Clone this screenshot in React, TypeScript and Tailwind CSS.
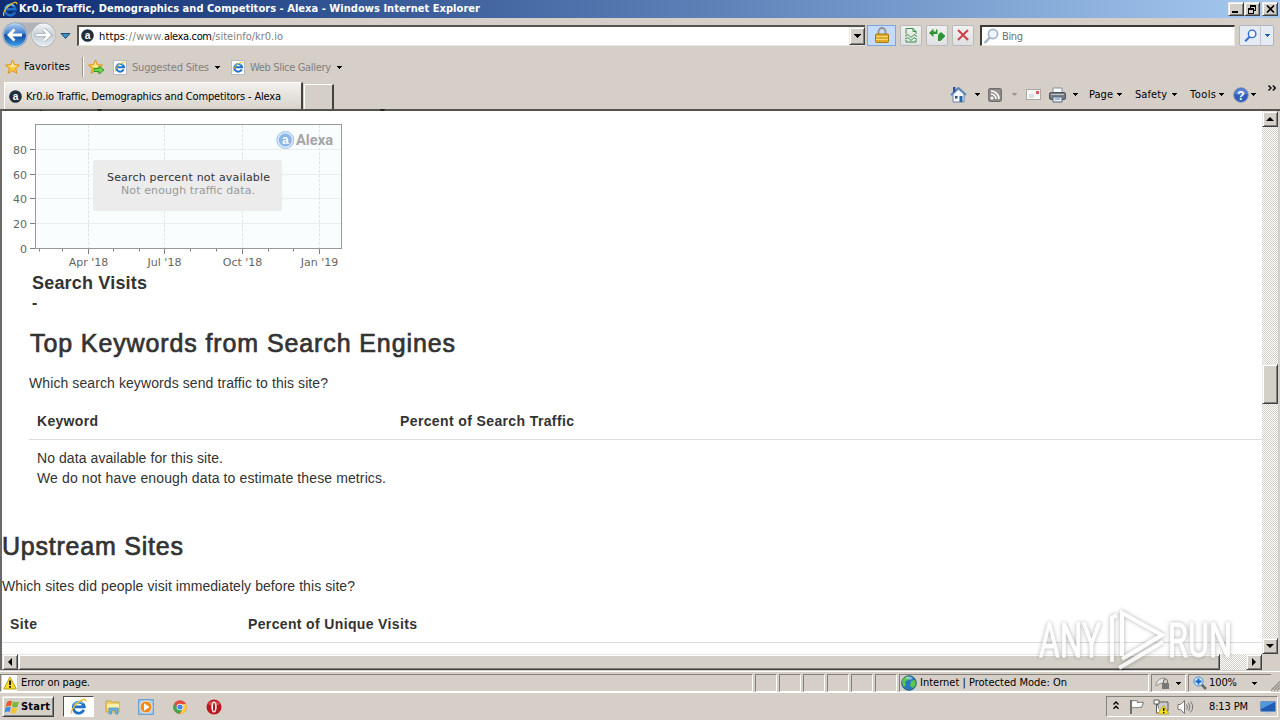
import { useLayoutEffect, useRef, useState, type ReactNode } from "react";

/** Single line of text whose tracking is adjusted to fill a given width. */
function Fit({ w, className = "", children }: { w: number; className?: string; children: ReactNode }) {
  const ref = useRef<HTMLSpanElement>(null);
  const [ls, setLs] = useState(0);
  useLayoutEffect(() => {
    const el = ref.current;
    if (!el) return;
    const n = (el.textContent ?? "").length;
    const natural = el.getBoundingClientRect().width - ls * n;
    setLs((w - natural) / Math.max(n - 1, 1));
  }, [w]);
  return (
    <span className={"block shrink-0 whitespace-pre " + className} style={{ width: w }}>
      <span ref={ref} style={{ letterSpacing: ls }}>{children}</span>
    </span>
  );
}

function Caret({ className = "", color = "#000" }: { className?: string; color?: string }) {
  return (
    <svg className={"block shrink-0 " + className} width="5" height="3" viewBox="0 0 5 3" shapeRendering="crispEdges">
      <path d="M0 0h5v1h-1v1h-1v1h-1v-1h-1v-1h-1z" fill={color} />
    </svg>
  );
}

function IeIcon({ size = 16, className = "" }: { size?: number; className?: string }) {
  return (
    <svg className={"block shrink-0 " + className} width={size} height={size} viewBox="0 0 16 16" fill="none">
      <path d="M13 11.2a5.2 5.2 0 1 1 .4-2.9H4.6" stroke="#1d6fc9" strokeWidth="2.6" />
      <path d="M12.2 5.2A5 5 0 0 0 3.6 7" stroke="#6fc4f5" strokeWidth="1.2" />
      <path d="M2.2 14.6C.2 13.400 2.600 8.200 7.500 4.300 11.500 1 15.300.3 15 3.300" stroke="#f0bd22" strokeWidth="1.3" />
    </svg>
  );
}

function PageIe({ className = "" }: { className?: string }) {
  return (
    <span className={"flex h-[15px] w-[14px] shrink-0 items-center justify-start border border-[#b9bcc0] bg-white " + className}>
      <IeIcon size={12} />
    </span>
  );
}

function AlexaMark({ size = 13 }: { size?: number }) {
  return (
    <svg className="block shrink-0" width={size} height={size} viewBox="0 0 14 14">
      <circle cx="7" cy="7" r="6.8" fill="#1f2f3b" />
      <text x="7" y="10.600" fontSize="11" fontWeight="700" textAnchor="middle" fill="#fff" fontFamily="Liberation Sans, sans-serif">a</text>
    </svg>
  );
}

function Star({ arrow = false }: { arrow?: boolean }) {
  return (
    <svg className="block shrink-0" width="17" height="16" viewBox="0 0 17 16">
      <path d="M7.500 1l2 4.600 5 .5-3.800 3.300 1.200 5-4.400-2.700-4.400 2.700 1.200-5L.5 6.100l5-.5z" fill="#fbc63a" stroke="#dd8f13" strokeWidth=".9" />
      <path d="M7.500 2.500l1.200 4 4 .2-5.200 1.800-4.500-1.800 3.500-.2z" fill="#fff0a5" />
      {arrow && <path d="M6 9.500h5V7l5 4-5 4v-2.500H6z" fill="#6dd54e" stroke="#259622" strokeWidth=".9" />}
    </svg>
  );
}

function ToolButton({ className = "", children }: { className?: string; children: ReactNode }) {
  return (
    <span className={"flex h-[21px] w-[22px] shrink-0 items-center justify-center rounded-[2px] border border-[#b7b9bd] bg-linear-to-b from-[#f1f1f1] to-[#dfe0e2] " + className}>
      {children}
    </span>
  );
}

const raised = "border border-t-[#ebe9e4] border-l-[#ebe9e4] border-r-[#404040] border-b-[#404040] shadow-[inset_1px_1px_0_#fff,inset_-1px_-1px_0_#808080] bg-[#d4d0c8]";
const dither = "bg-[#e9e6e2] bg-[repeating-conic-gradient(#d4d0c8_0_25%,#ffffff_0_50%)] bg-[length:2px_2px]";

function WinButton({ className = "", children }: { className?: string; children: ReactNode }) {
  return <span className={"flex h-[14px] w-[16px] items-center justify-center " + raised + " " + className}>{children}</span>;
}

function TitleBar() {
  return (
    <header className="flex h-[18px] shrink-0 items-center bg-linear-to-r from-[#0f2c72] to-[#a6caf0] pr-[2px] pl-[2px]">
      <IeIcon size={16} />
      <Fit w={460} className="ml-[1px] text-[11px] leading-[18px] font-bold text-white">
        Kr0.io Traffic, Demographics and Competitors - Alexa - Windows Internet Explorer
      </Fit>
      <div className="ml-auto flex">
        <WinButton><svg width="8" height="8" viewBox="0 0 8 8"><path d="M0 6h6v2H0z" /></svg></WinButton>
        <WinButton>
          <svg width="9" height="9" viewBox="0 0 9 9" shapeRendering="crispEdges">
            <path d="M2 0h6v6h-2v-1h1v-3h-4v1h-1zM0 3h6v6h-6zM1 5v3h4v-3z" fillRule="evenodd" />
          </svg>
        </WinButton>
        <WinButton className="ml-[2px]"><svg width="9" height="8" viewBox="0 0 9 8"><path d="M1 .5l7 7M8 .5l-7 7" stroke="#000" strokeWidth="1.6" /></svg></WinButton>
      </div>
    </header>
  );
}

function NavButtons() {
  return (
    <svg className="block shrink-0" width="72" height="32" viewBox="0 0 72 32">
      <defs>
        <linearGradient id="bk" x1="0" y1="0" x2="0" y2="1">
          <stop offset="0" stopColor="#a8cdf3" /><stop offset=".45" stopColor="#3f7cc9" /><stop offset=".5" stopColor="#134a9f" /><stop offset="1" stopColor="#3ea0ea" />
        </linearGradient>
        <linearGradient id="fw" x1="0" y1="0" x2="0" y2="1">
          <stop offset="0" stopColor="#f4f6f9" /><stop offset=".5" stopColor="#c5ccd5" /><stop offset="1" stopColor="#e8edf3" />
        </linearGradient>
      </defs>
      <path d="M14 3.500h30v4q-15 3-15 10q0-7-15-10z" fill="#b3b3ba" />
      <circle cx="15" cy="16" r="12.500" fill="#8797ad" />
      <circle cx="15" cy="16" r="11.500" fill="url(#bk)" stroke="#d8e6f5" strokeWidth=".6" />
      <path d="M14.500 10.500L9 16l5.500 5.500M9.500 16H22" stroke="#fff" strokeWidth="2.800" fill="none" />
      <circle cx="43.500" cy="16" r="12.200" fill="#a3a9b2" />
      <circle cx="43.500" cy="16" r="11.300" fill="url(#fw)" stroke="#fff" strokeWidth=".5" />
      <path d="M44 10.500l5.500 5.500-5.500 5.500M49 16H36.500" stroke="#9ba5b1" strokeWidth="4" fill="none" />
      <path d="M44 10.500l5.500 5.500-5.500 5.500M49 16H36.500" stroke="#fff" strokeWidth="2.600" fill="none" />
      <path d="M61 14.500h9l-4.500 5z" fill="#3f8fc5" stroke="#1d4e78" strokeWidth="1" />
    </svg>
  );
}

function Magnifier({ color, size = 16 }: { color: string; size?: number }) {
  return (
    <svg className="block shrink-0" width={size} height={size} viewBox="0 0 16 16" fill="none">
      <path d="M7 9.500L1.500 15" stroke={color} strokeWidth="2.400" />
      <circle cx="10" cy="6" r="4.600" fill="#eef5fd" stroke={color} strokeWidth="1.700" />
    </svg>
  );
}

function AddressRow() {
  return (
    <div className="flex h-[34px] shrink-0 items-center">
      <NavButtons />
      <div className="ml-[5px] flex h-[21px] w-[788px] shrink-0 items-center border-t-2 border-l-2 border-b border-t-[#55534f] border-l-[#55534f] border-b-[#e8e6e0] bg-white pl-[2px]">
        <AlexaMark size={13} />
        <div className="mt-[2px] ml-[5px] flex text-[11px] leading-[16px] text-[#808080]">
          <Fit w={26} className="text-black">https</Fit>
          <Fit w={39}>://www.</Fit>
          <Fit w={48} className="text-black">alexa.com</Fit>
          <Fit w={71}>/siteinfo/kr0.io</Fit>
        </div>
        <span className={"ml-auto flex h-[18px] w-[16px] items-center justify-center " + raised}>
          <svg width="7" height="4" viewBox="0 0 7 4" shapeRendering="crispEdges"><path d="M0 0h7v1h-1v1h-1v1h-1v1h-1v-1h-1v-1h-1v-1h-1z" /></svg>
        </span>
      </div>
      <span className="ml-[2px] flex h-[21px] w-[29px] shrink-0 items-center justify-center border border-[#7da7e2] bg-[#c4dcfb]">
        <svg width="14" height="16" viewBox="0 0 14 16">
          <path d="M3.500 8V4.500a3.500 3.500 0 0 1 7 0V8" fill="none" stroke="#97918b" strokeWidth="1.800" />
          <rect x=".5" y="7" width="13" height="8.500" rx="1" fill="#e0a928" stroke="#a87913" />
          <path d="M1 9.500h12M1 12.500h12" stroke="#f9d978" />
        </svg>
      </span>
      <ToolButton className="ml-[4px]">
        <svg width="14" height="16" viewBox="0 0 14 16" fill="none" stroke="#379245">
          <path d="M2 7V1.500h7l3 3V7M9 1.500v3h3M2 13v2h10v-2" /><path d="M1 9l3-1.500 3 3 3-3 3 2M1 12l3-1.500 3 3 3-3 3 2" />
        </svg>
      </ToolButton>
      <ToolButton className="ml-[4px]">
        <svg width="16" height="14" viewBox="0 0 16 14" fill="#2f9436">
          <path d="M0 5L4.500.5V3.500H7V1.500h1.500V6H4.500v3z" />
          <path d="M16 8.500L11.500 13H10V9.500H9V7h2l-2-.5L12 4l4 3.500zM9 9l2 .5V13H9z" />
        </svg>
      </ToolButton>
      <ToolButton className="ml-[4px]">
        <svg width="12" height="12" viewBox="0 0 12 12"><path d="M1 1l10 10M11 1L1 11" stroke="#d04048" strokeWidth="2" /></svg>
      </ToolButton>
      <div className="ml-[6px] flex h-[21px] w-[255px] shrink-0 items-center border-t-2 border-l-2 border-r border-b border-t-[#3c3a37] border-l-[#3c3a37] border-r-[#e8e6e0] border-b-[#e8e6e0] bg-white pl-[1px]">
        <Magnifier color="#a2b4c6" />
        <Fit w={21} className="mt-[2px] ml-[3px] text-[11px] leading-[16px] text-[#707070]">Bing</Fit>
      </div>
      <div className="ml-[4px] flex h-[21px] w-[35px] shrink-0 items-center rounded-[2px] border border-[#b0b5bf] bg-[#e6ebf3]">
        <span className="flex h-full w-[21px] items-center justify-center border-r border-[#c0c5cf]"><Magnifier color="#2f6fce" size={13} /></span>
        <Caret color="#2460b8" className="ml-[4px]" />
      </div>
    </div>
  );
}

function FavoritesRow() {
  return (
    <div className="flex h-[28px] shrink-0 items-center pt-[2px] text-[11px] leading-[16px] text-[#808080]">
      <span className="ml-[5px]"><Star /></span>
      <Fit w={46} className="ml-[2px] text-black">Favorites</Fit>
      <span className="ml-[12px] h-[20px] w-[2px] border-l border-[#9a968f] bg-white" />
      <span className="ml-[4px]"><Star arrow /></span>
      <PageIe className="ml-[8px]" />
      <Fit w={77} className="mt-px ml-[5px]">Suggested Sites</Fit>
      <Caret className="ml-[6px]" />
      <PageIe className="ml-[11px]" />
      <Fit w={81} className="mt-px ml-[5px]">Web Slice Gallery</Fit>
      <Caret className="ml-[6px]" />
    </div>
  );
}

function TabRow() {
  return (
    <div className="flex h-[29px] shrink-0 items-end text-[11px] leading-[16px]">
      <div className="ml-[4px] flex h-[27px] w-[299px] shrink-0 items-center border-t border-r-2 border-l border-white border-r-[#45433f] bg-linear-to-b from-[#f3f1ee] to-[#d8d3cc] pl-[4px]">
        <AlexaMark size={13} />
        <Fit w={255} className="mt-px ml-[4px]">Kr0.io Traffic, Demographics and Competitors - Alexa</Fit>
      </div>
      <div className="ml-[1px] h-[25px] w-[30px] shrink-0 border-t border-r-2 border-l border-white border-r-[#45433f]" />
      <div className="flex h-[29px] flex-1 items-center pl-[616px]">
        <svg className="block shrink-0" width="18" height="18" viewBox="0 0 18 18">
          <path d="M3 8v8h11V8L8.500 3z" fill="#f2f7fc" stroke="#6c87ac" />
          <path d="M1 9l7.500-7 7.500 7" fill="none" stroke="#5c82b8" strokeWidth="1.800" />
          <path d="M3 1h2.500v4L3 7z" fill="#3451a0" /><path d="M9.500 10h3v6h-3z" fill="#2767a8" /><path d="M5 10h2.500v2.500H5z" fill="#274e90" />
        </svg>
        <Caret className="ml-[7px]" />
        <svg className="ml-[8px] block shrink-0" width="14" height="14" viewBox="0 0 14 14" fill="none" stroke="#fff" strokeWidth="1.600">
          <rect x=".7" y=".7" width="12.600" height="12.600" rx="1.500" fill="#959391" stroke="#6f6d6b" strokeWidth="1.200" />
          <path d="M3 6a5 5 0 0 1 5 5M3 3a8 8 0 0 1 8 8" /><circle cx="4" cy="10" r=".7" fill="#fff" />
        </svg>
        <Caret className="ml-[10px]" color="#9b9893" />
        <svg className="ml-[9px] block shrink-0" width="15" height="11" viewBox="0 0 15 11">
          <rect x=".5" y=".5" width="14" height="10" fill="#f8f8f7" stroke="#aaa7a5" /><path d="M10 2h3v3h-3z" fill="#d75a56" /><path d="M3 6h5M3 8h5" stroke="#c5c7cb" />
        </svg>
        <svg className="ml-[8px] block shrink-0" width="17" height="16" viewBox="0 0 17 16">
          <path d="M4 1h9v5H4z" fill="#fff" stroke="#8490a0" /><rect x=".5" y="5.500" width="16" height="7" rx="1.500" fill="#777d85" stroke="#4d5158" />
          <path d="M2 7.500h13" stroke="#bcc2c9" /><path d="M4 10h9v5H4z" fill="#e6f0fa" stroke="#596779" /><path d="M6 12h5" stroke="#4d83b9" />
        </svg>
        <Caret className="ml-[7px]" />
        <Fit w={24} className="ml-[11px]">Page</Fit><Caret className="ml-[4px]" />
        <Fit w={32} className="ml-[13px]">Safety</Fit><Caret className="ml-[5px]" />
        <Fit w={26} className="ml-[13px]">Tools</Fit><Caret className="ml-[3px]" />
        <svg className="ml-[9px] block shrink-0" width="16" height="16" viewBox="0 0 16 16">
          <circle cx="8" cy="8" r="7.300" fill="#2e5dbd" stroke="#8897b5" /><path d="M2 7a6 5.500 0 0 1 12 0q-6 2-12 0" fill="#7fa5e8" opacity=".55" />
          <text x="8" y="12.500" fontSize="12" fontWeight="700" fill="#fff" textAnchor="middle" fontFamily="Liberation Sans, sans-serif">?</text>
        </svg>
        <Caret className="ml-[2px]" />
        <svg className="mb-[13px] ml-[12px] block shrink-0" width="9" height="6" viewBox="0 0 9 6" fill="none" stroke="#000" strokeWidth="1.400"><path d="M.5.500L3 3 .5 5.500M4.800.5L7.300 3 4.800 5.500" /></svg>
      </div>
    </div>
  );
}

const yTicks = [[80, 149.5], [60, 174.5], [40, 198.5], [20, 223.5], [0, 248.5]];
const xMajor: [string, number][] = [["Apr '18", 88.5], ["Jul '18", 164.5], ["Oct '18", 242.5], ["Jan '19", 319.5]];
const xMinor = [39.5, 62.5, 113.5, 139.5, 190.5, 216.5, 268.5, 293.5];

function Chart() {
  return (
    <svg className="block shrink-0" width="400" height="162" viewBox="2 111 400 162" fontFamily="DejaVu Sans, sans-serif" fontSize="11">
      <rect x="35.500" y="124.500" width="306" height="124" fill="#fafdfd" />
      <g stroke="#dfe4e4" strokeDasharray="3 1.500">
        {yTicks.slice(0, 4).map(([v, y]) => <path key={v} d={`M36 ${y}H341`} strokeDasharray="none" stroke="#e9eded" />)}
        {xMajor.map(([l, x]) => <path key={l} d={`M${x} 125V248`} />)}
      </g>
      <rect x="35.500" y="124.500" width="306" height="124" fill="none" stroke="#999" />
      <g stroke="#808080">
        {yTicks.map(([v, y]) => <path key={v} d={`M30 ${y}h5`} />)}
        {xMajor.map(([l, x]) => <path key={l} d={`M${x} 249v5`} />)}
        {xMinor.map((x) => <path key={x} d={`M${x} 249v2.500`} />)}
      </g>
      <g fill="#666">
        {yTicks.map(([v, y]) => <text key={v} x="27" y={y + 4} textAnchor="end">{v}</text>)}
        {xMajor.map(([l, x]) => <text key={l} x={x} y="266" textAnchor="middle">{l}</text>)}
      </g>
      <rect x="93" y="160" width="189" height="51" rx="2" fill="#ececec" />
      <text x="107" y="181" fill="#333" textLength="163">Search percent not available</text>
      <text x="121" y="194" fill="#999" textLength="134">Not enough traffic data.</text>
      <circle cx="285.300" cy="140" r="8.500" fill="#d9e9fb" stroke="#9cc2ee" />
      <circle cx="285.300" cy="140" r="6.500" fill="#8ab5ea" />
      <text x="285.300" y="144" fontSize="12" fontWeight="700" fill="#fff" textAnchor="middle" fontFamily="Liberation Sans, sans-serif">a</text>
      <text x="296" y="145" fontSize="14" fontWeight="700" fill="#a3a5a7" textLength="37" lengthAdjust="spacingAndGlyphs" fontFamily="Roboto, sans-serif">Alexa</text>
    </svg>
  );
}

const heading = "text-[25px] leading-[30px] [-webkit-text-stroke:0.7px_#333]";

function Page() {
  return (
    <main className="h-[543px] w-[1260px] overflow-hidden bg-white font-['Liberation_Sans',Arial,sans-serif] text-[14px] leading-[20px] text-[#333]">
      <Chart />
      <Fit w={115} className="ml-[30px] text-[18px] font-bold">Search Visits</Fit>
      <p className="ml-[30px] text-[16px] font-bold">-</p>
      <Fit w={425} className={"mt-[15px] ml-[28px] " + heading}>Top Keywords from Search Engines</Fit>
      <Fit w={299} className="mt-[15px] ml-[27px]">Which search keywords send traffic to this site?</Fit>
      <div className="mt-[10px] ml-[27px] flex h-[37px] items-center border-b border-[#ddd] pl-[8px] font-bold">
        <Fit w={61}>Keyword</Fit>
        <Fit w={174} className="ml-[302px]">Percent of Search Traffic</Fit>
      </div>
      <Fit w={186} className="mt-[8px] ml-[35px]">No data available for this site.</Fit>
      <Fit w={349} className="ml-[35px]">We do not have enough data to estimate these metrics.</Fit>
      <Fit w={181} className={"mt-[43px] " + heading}>Upstream Sites</Fit>
      <Fit w={353} className="mt-[15px]">Which sites did people visit immediately before this site?</Fit>
      <div className="mt-[10px] flex h-[37px] items-center border-b border-[#ddd] pl-[8px] font-bold">
        <Fit w={27}>Site</Fit>
        <Fit w={169} className="ml-[211px]">Percent of Unique Visits</Fit>
      </div>
    </main>
  );
}

function ScrollButton({ d }: { d: string }) {
  return (
    <span className={"flex h-[16px] w-[16px] shrink-0 items-center justify-center " + raised}>
      <svg width="8" height="8" viewBox="0 0 8 8"><path d={d} /></svg>
    </span>
  );
}

const pane = "flex h-[18px] shrink-0 items-center border-t border-l border-r border-b border-t-[#85817b] border-l-[#85817b] border-r-white border-b-white ";

function StatusBar() {
  return (
    <div className="flex h-[21px] shrink-0 items-start border-t border-white pt-[2px] text-[11px] leading-[16px]">
      <div className={pane + "w-[753px] pl-[1px]"}>
        <span className="flex h-[16px] w-[15px] items-center justify-center bg-white">
          <svg width="14" height="14" viewBox="0 0 14 14"><path d="M7 1L13.300 13H.7z" fill="#f8df25" stroke="#b4a01b" /><path d="M6.200 4.500h1.700v4.500H6.200zM6.200 10h1.700v1.700H6.200z" /></svg>
        </span>
        <Fit w={69} className="ml-[4px]">Error on page.</Fit>
      </div>
      {[0, 1, 2, 3, 4, 5].map((i) => <div key={i} className={pane + "ml-[2px] w-[22px]"} />)}
      <div className={pane + "ml-[2px] w-[250px] pl-[1px]"}>
        <svg className="block shrink-0" width="16" height="16" viewBox="0 0 16 16">
          <circle cx="8" cy="8" r="7.300" fill="#2878bd" stroke="#28617c" /><path d="M2 4q4-4 6-2l-1 3-3 2 1 3-2 2Q0 8 2 4zM10 6l4-1q2 5-2 8l-3-2z" fill="#5dc653" /><path d="M4 3q4-3 8 0l-3 2z" fill="#c6ecf7" opacity=".6" />
        </svg>
        <Fit w={147} className="ml-[3px]">Internet | Protected Mode: On</Fit>
      </div>
      <div className={pane + "ml-[2px] w-[35px] pl-[3px]"}>
        <svg className="block shrink-0" width="16" height="14" viewBox="0 0 16 14">
          <path d="M1 8q2-6 9-6l-2 5q-3 0-7 3z" fill="#e8e8e8" stroke="#96938f" /><path d="M8.500 7V5a2 2 0 0 1 4 0v2" fill="none" stroke="#777" /><path d="M7 7h7v6H7z" fill="#777" />
        </svg>
        <Caret className="ml-[5px]" />
      </div>
      <div className={pane + "ml-[2px] w-[83px] border-r-0 pl-[4px]"}>
        <svg className="block shrink-0" width="14" height="14" viewBox="0 0 14 14"><path d="M8 8l5 5" stroke="#686866" strokeWidth="2.500" /><circle cx="5.500" cy="5.500" r="4.600" fill="#cde6fc" stroke="#4c8dcf" /><path d="M5.500 2.500v6M2.500 5.500h6" stroke="#1266c5" strokeWidth="1.800" /></svg>
        <Fit w={28} className="ml-[2px]">100%</Fit>
        <Caret className="ml-[15px]" />
      </div>
      <svg className="mt-[6px] ml-auto block" width="12" height="12" viewBox="0 0 12 12"><path d="M0 12L12 0M4 12l8-8M8 12l4-4" stroke="#8b8781" strokeWidth="1.500" /></svg>
    </div>
  );
}

function TaskBar() {
  return (
    <footer className="flex h-[28px] shrink-0 items-start border-t border-white pt-[3px] pr-[2px] pl-[2px] text-[11px]">
      <div className={"flex h-[21px] w-[52px] items-center pl-[1px] " + raised}>
        <svg className="block shrink-0" width="17" height="16" viewBox="0 0 17 16">
          <path d="M3 3q3-2 5-1L7 7Q5 6 1.500 8z" fill="#e85a25" /><path d="M9 2.500q3 1.500 6 0L13.500 8q-3 1-5.500-.5z" fill="#7bb93a" />
          <path d="M1.300 9q3-2 5.500-1l-1.200 5Q3 12 .5 13.500z" fill="#3d8ede" /><path d="M7.700 8.500q3 1.500 5.500.5l-1.500 5q-3 1-5-.5z" fill="#f8c32c" />
        </svg>
        <Fit w={29} className="leading-[18px] font-bold">Start</Fit>
      </div>
      <div className="ml-[9px] flex h-[21px] w-[31px] items-center justify-center border border-t-[#504e4a] border-l-[#504e4a] border-r-white border-b-white bg-white"><IeIcon size={17} /></div>
      <svg className="mt-[3px] ml-[11px] block" width="16" height="16" viewBox="0 0 16 16">
        <path d="M1 2h5l1 1h7v10H1z" fill="#efcf68" stroke="#c9a74c" /><path d="M2 5h12v4H2z" fill="#fff0a8" /><path d="M4 15V9h9v6h-2.500v-3.500h-4V15z" fill="#62b6e8" stroke="#438fc2" strokeWidth=".7" />
      </svg>
      <svg className="mt-[3px] ml-[17px] block" width="16" height="16" viewBox="0 0 16 16">
        <rect x=".7" y=".7" width="14.600" height="14.600" fill="#a8d0ef" stroke="#5b96ca" /><circle cx="8" cy="8" r="6" fill="#f28b1e" stroke="#fff" strokeWidth=".7" /><path d="M6 4.300L11.500 8 6 11.700z" fill="#fff" />
      </svg>
      <svg className="mt-[4px] ml-[19px] block" width="14" height="14" viewBox="0 0 14 14">
        <circle cx="7" cy="7" r="6.800" fill="#e44b3b" /><path d="M1 4a6.800 6.800 0 0 0 5.500 9.800L9.500 8 4.500 8z" fill="#42a953" /><path d="M9.500 4H13a6.800 6.800 0 0 1-6 9.800L10 8z" fill="#f8cf3c" /><circle cx="7" cy="7" r="3.300" fill="#fff" /><circle cx="7" cy="7" r="2.600" fill="#4286ea" />
      </svg>
      <svg className="mt-[3px] ml-[19px] block" width="16" height="16" viewBox="0 0 16 16">
        <circle cx="8" cy="8" r="7.500" fill="#b81920" /><path d="M2 5a7 6 0 0 1 12 0q-6 3-12 0" fill="#e77674" opacity=".6" /><ellipse cx="8" cy="8" rx="2.700" ry="5.500" fill="#f6f1ef" /><ellipse cx="8" cy="8" rx="1" ry="4.300" fill="#a5131b" />
      </svg>
      <div className="ml-auto flex h-[21px] w-[172px] items-center border border-t-[#85817b] border-l-[#85817b] border-r-white border-b-white pl-[6px]">
        <svg className="mb-[2px] block shrink-0" width="6" height="9" viewBox="0 0 6 9" fill="none" stroke="#000" strokeWidth="1.400"><path d="M.5 3.500L3 1l2.500 2.500M.5 7.800L3 5.300l2.500 2.500" /></svg>
        <svg className="ml-[10px] block shrink-0" width="16" height="16" viewBox="0 0 16 16"><path d="M2 1v14" stroke="#706e6b" strokeWidth="2" /><path d="M2.500 2q3-1 6 0v1.500q3-.5 6 0l-2 5q-2-.5-4 0V9q-3-1-6 0z" fill="#fff" stroke="#777" /></svg>
        <svg className="ml-[8px] block shrink-0" width="16" height="16" viewBox="0 0 16 16"><path d="M4 3h11v9H6z" fill="#c9ccd0" stroke="#5e5d5a" /><path d="M1 1h5v4H1zM3.500 5v9h4" fill="#fff" stroke="#5e5d5a" /><path d="M10.500 6l5.500 9H5z" fill="#f7dc1f" stroke="#b59f20" strokeWidth=".7" /><path d="M10 9h1.400v3H10zM10 13h1.400v1.200H10z" /></svg>
        <svg className="ml-[8px] block shrink-0" width="17" height="16" viewBox="0 0 17 16" fill="none" stroke="#777"><path d="M1 5.500h2.500L7.500 1.500v13L3.500 10.500H1z" fill="#fff" /><path d="M9.500 5.500q2 2.500 0 5M11.500 4q3 4 0 8M13.500 2.500q4.500 5.500 0 11" /></svg>
        <Fit w={39} className="mt-px ml-[15px] leading-[18px]">8:13 PM</Fit>
        <svg className="ml-[12px] block shrink-0" width="16" height="14" viewBox="0 0 16 14"><rect x=".5" y="1.500" width="15" height="10" rx="1" fill="#1f5cb4" stroke="#6f94c1" /><path d="M1 2h14L1 9z" fill="#5097e0" /><path d="M5 13h6" stroke="#bdc8d2" strokeWidth="1.500" /></svg>
      </div>
    </footer>
  );
}

function Watermark() {
  return (
    <svg className="pointer-events-none absolute top-[595px] left-[1020px] overflow-visible" width="250" height="95" viewBox="1020 595 250 95">
      <g className="drop-shadow-[0_0_2px_rgba(0,0,0,0.4)]" opacity=".8">
        <g fontFamily="Roboto, sans-serif" fontSize="49" fill="#fff" stroke="#fff" strokeWidth="1">
          <text x="1039" y="657" textLength="62" lengthAdjust="spacingAndGlyphs">ANY</text>
          <text x="1168" y="657" textLength="64" lengthAdjust="spacingAndGlyphs">RUN</text>
        </g>
        <g fill="none" stroke="#fff" strokeWidth="4">
          <path d="M1122 656V613l40 22-40 24" />
          <path d="M1117 615l-5 3v44M1119 668l44-26" />
        </g>
      </g>
    </svg>
  );
}

/** Descenders of the line scrolled just above the viewport. */
function ScrolledDescenders() {
  return (
    <svg className="pointer-events-none absolute top-[108px] left-[36px]" width="360" height="3" viewBox="0 0 360 3" fill="#222">
      <path d="M4 2h2v1H4zM61 1h5v1h-1v1h-3v-1h-1zM344 1h5v1h-1v1h-3v-1h-1z" />
    </svg>
  );
}

export default function App() {
  return (
    <div className="relative flex h-[720px] w-[1280px] flex-col overflow-hidden bg-[#d5cfc8] font-['DejaVu_Sans_Condensed','DejaVu_Sans',sans-serif] text-black">
      <TitleBar />
      <AddressRow />
      <FavoritesRow />
      <TabRow />
      <div className="flex h-[561px] shrink-0 flex-col border-t-2 border-l-2 border-t-[#55534f] border-l-[#6b6966]">
        <div className="flex">
          <Page />
          <div className={"flex h-[543px] w-[16px] flex-col " + dither}>
            <ScrollButton d="M0 6h8L4 2z" />
            <div className={"mt-[237px] h-[40px] shrink-0 " + raised} />
            <div className="mt-auto"><ScrollButton d="M0 2h8L4 6z" /></div>
          </div>
        </div>
        <div className="flex w-[1276px]">
          <div className={"flex h-[16px] w-[1260px] " + dither}>
            <ScrollButton d="M6 0v8L2 4z" />
            <div className={"w-[1202px] " + raised} />
            <div className="ml-auto"><ScrollButton d="M2 0v8l4-4z" /></div>
          </div>
        </div>
      </div>
      <div className="mt-px shrink-0"><StatusBar /></div>
      <TaskBar />
      <ScrolledDescenders />
      <Watermark />
    </div>
  );
}
